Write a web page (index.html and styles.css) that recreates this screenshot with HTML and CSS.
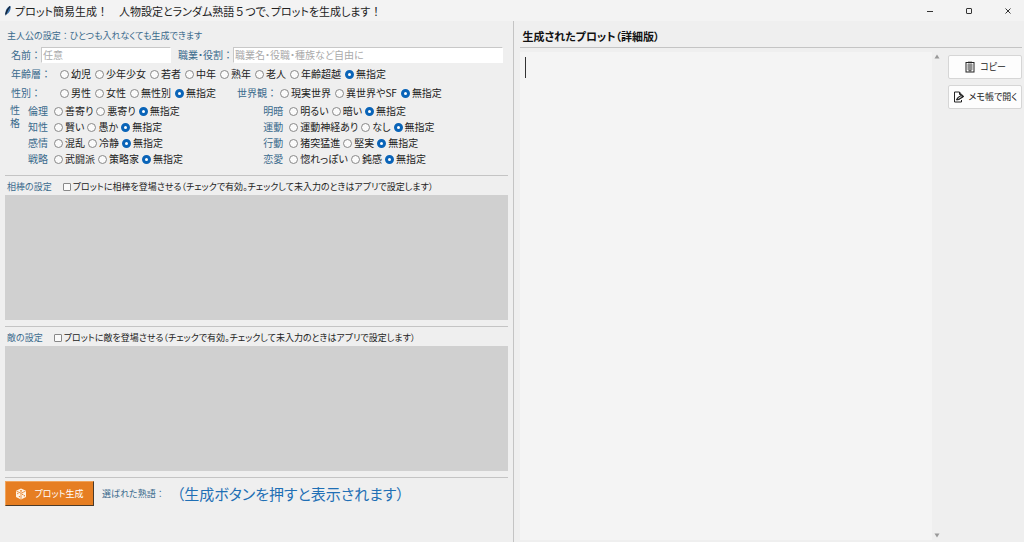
FILE: index.html
```html
<!DOCTYPE html>
<html lang="ja">
<head>
<meta charset="utf-8">
<meta name="viewport" content="width=device-width, initial-scale=1">
<title>プロット簡易生成！</title>
<link rel="stylesheet" href="styles.css">
</head>
<body>
<header class="titlebar">
  <svg class="feather" viewBox="0 0 8 12" aria-hidden="true"><path d="M6.500 1C4 1.500 1.200 4.500 1.500 8.500L1 11L2.500 9.300C5.500 8 7.200 4.500 6.500 1Z" fill="#3d74ad"/><path d="M6 1.500C4 3.500 2.500 6 1.600 9.500" stroke="#16263a" stroke-width="1.400" fill="none"/></svg>
  <h1 class="title">プロット簡易生成<span class="full">！　</span>人物設定とランダム熟語<span class="full">５</span>つで、プロットを生成します<span class="full">！</span></h1>
  <div class="window-buttons">
    <button class="window-button" type="button" aria-label="最小化"><svg viewBox="0 0 8 8"><path d="M1 4.500H7"/></svg></button>
    <button class="window-button" type="button" aria-label="最大化"><svg viewBox="0 0 8 8"><rect x="1.500" y="1.500" width="5" height="5" rx=".5"/></svg></button>
    <button class="window-button" type="button" aria-label="閉じる"><svg viewBox="0 0 8 8"><path d="M1.500 1.500L6.500 6.500M6.500 1.500L1.500 6.500"/></svg></button>
  </div>
</header>
<main class="panes">
  <form class="settings">
    <h2 class="caption">主人公の設定<span class="full">：</span>ひとつも入れなくても生成できます</h2>
    <div class="row names">
      <label class="label full" for="name">名前：</label>
      <input class="field" id="name" type="text" placeholder="任意">
      <label class="label label-job" for="job">職業・役割<span class="full">：</span></label>
      <input class="field field-job" id="job" type="text" placeholder="職業名・役職・種族など自由に">
    </div>
    <div class="row">
      <span class="label label-wide full" id="l-age">年齢層：</span>
      <div class="options" role="radiogroup" aria-labelledby="l-age">
        <label class="option"><input type="radio" name="age">幼児</label>
        <label class="option"><input type="radio" name="age">少年少女</label>
        <label class="option"><input type="radio" name="age">若者</label>
        <label class="option"><input type="radio" name="age">中年</label>
        <label class="option"><input type="radio" name="age">熟年</label>
        <label class="option"><input type="radio" name="age">老人</label>
        <label class="option"><input type="radio" name="age">年齢超越</label>
        <label class="option"><input type="radio" name="age" checked>無指定</label>
      </div>
    </div>
    <div class="row">
      <span class="label label-wide full" id="l-sex">性別：</span>
      <div class="options" role="radiogroup" aria-labelledby="l-sex">
        <label class="option"><input type="radio" name="sex">男性</label>
        <label class="option"><input type="radio" name="sex">女性</label>
        <label class="option"><input type="radio" name="sex">無性別</label>
        <label class="option"><input type="radio" name="sex" checked>無指定</label>
      </div>
      <span class="label label-world full" id="l-world">世界観：</span>
      <div class="options" role="radiogroup" aria-labelledby="l-world">
        <label class="option"><input type="radio" name="world">現実世界</label>
        <label class="option"><input type="radio" name="world">異世界やSF</label>
        <label class="option"><input type="radio" name="world" checked>無指定</label>
      </div>
    </div>
    <div class="traits">
      <span class="label traits-label">性格</span>
      <div class="traits-grid">
        <div class="trait" role="radiogroup" aria-labelledby="t1"><span class="label" id="t1">倫理</span>
          <label class="option"><input type="radio" name="t1">善寄り</label><label class="option"><input type="radio" name="t1">悪寄り</label><label class="option"><input type="radio" name="t1" checked>無指定</label></div>
        <div class="trait" role="radiogroup" aria-labelledby="t2"><span class="label" id="t2">明暗</span>
          <label class="option"><input type="radio" name="t2">明るい</label><label class="option"><input type="radio" name="t2">暗い</label><label class="option"><input type="radio" name="t2" checked>無指定</label></div>
        <div class="trait" role="radiogroup" aria-labelledby="t3"><span class="label" id="t3">知性</span>
          <label class="option"><input type="radio" name="t3">賢い</label><label class="option"><input type="radio" name="t3">愚か</label><label class="option"><input type="radio" name="t3" checked>無指定</label></div>
        <div class="trait" role="radiogroup" aria-labelledby="t4"><span class="label" id="t4">運動</span>
          <label class="option"><input type="radio" name="t4">運動神経あり</label><label class="option"><input type="radio" name="t4">なし</label><label class="option"><input type="radio" name="t4" checked>無指定</label></div>
        <div class="trait" role="radiogroup" aria-labelledby="t5"><span class="label" id="t5">感情</span>
          <label class="option"><input type="radio" name="t5">混乱</label><label class="option"><input type="radio" name="t5">冷静</label><label class="option"><input type="radio" name="t5" checked>無指定</label></div>
        <div class="trait" role="radiogroup" aria-labelledby="t6"><span class="label" id="t6">行動</span>
          <label class="option"><input type="radio" name="t6">猪突猛進</label><label class="option"><input type="radio" name="t6">堅実</label><label class="option"><input type="radio" name="t6" checked>無指定</label></div>
        <div class="trait" role="radiogroup" aria-labelledby="t7"><span class="label" id="t7">戦略</span>
          <label class="option"><input type="radio" name="t7">武闘派</label><label class="option"><input type="radio" name="t7">策略家</label><label class="option"><input type="radio" name="t7" checked>無指定</label></div>
        <div class="trait" role="radiogroup" aria-labelledby="t8"><span class="label" id="t8">恋愛</span>
          <label class="option"><input type="radio" name="t8">惚れっぽい</label><label class="option"><input type="radio" name="t8">鈍感</label><label class="option"><input type="radio" name="t8" checked>無指定</label></div>
      </div>
    </div>
    <section class="character">
      <div class="character-head">
        <h2 class="label">相棒の設定</h2>
        <label class="option"><input type="checkbox">プロットに相棒を登場させる（チェックで有効。チェックして未入力のときはアプリで設定します）</label>
      </div>
      <div class="disabled-area"></div>
    </section>
    <section class="character">
      <div class="character-head">
        <h2 class="label">敵の設定</h2>
        <label class="option"><input type="checkbox">プロットに敵を登場させる（チェックで有効。チェックして未入力のときはアプリで設定します）</label>
      </div>
      <div class="disabled-area"></div>
    </section>
    <div class="actions">
      <button class="generate" type="button">
        <svg class="die" viewBox="0 0 12 12" aria-hidden="true"><path d="M6 .5L11 2.800V9L6 11.500L1 9V2.800Z" fill="#fff3e4"/><path d="M1.500 3.200L6 5.200L10.500 3.200M6 5.200V11" stroke="#e67e22" stroke-width=".8" fill="none"/><g fill="#e67e22"><circle cx="6" cy="2.800" r=".9"/><circle cx="2.800" cy="5.600" r=".7"/><circle cx="4.400" cy="8.600" r=".7"/><circle cx="7.700" cy="6.400" r=".7"/><circle cx="9.300" cy="7.800" r=".7"/></g></svg>
        プロット生成
      </button>
      <span class="label">選ばれた熟語<span class="full">：</span></span>
      <output class="idioms">（生成ボタンを押すと表示されます）</output>
    </div>
  </form>
  <section class="result">
    <h2 class="result-title"><label for="plot">生成されたプロット（詳細版）</label></h2>
    <div class="result-body">
      <div class="editor">
        <textarea class="plot" id="plot"></textarea>
        <span class="caret"></span>
      </div>
      <div class="scrollbar" aria-hidden="true">
        <svg viewBox="0 0 6 5"><path d="M3 .5L5.500 4.500H.5Z"/></svg>
        <svg viewBox="0 0 6 5"><path d="M3 4.500L5.500 .5H.5Z"/></svg>
      </div>
      <div class="tools">
        <button class="tool" type="button"><svg viewBox="0 0 12 12" aria-hidden="true"><rect x="2" y="1.500" width="8" height="9.500"/><path d="M4 1.500H8" stroke-width="1.600"/><path d="M3.500 4H8.500M3.500 6H8.500M3.500 8H8.500M4.500 9.800H7.500"/></svg>コピー</button>
        <button class="tool" type="button"><svg viewBox="0 0 12 12" aria-hidden="true"><path d="M8.500 3.500L6.500 1H1.500V11H8.500V9M6.500 1V3.500H8.500"/><path d="M3.500 9L4.500 6.800L9 3.800L10.800 5.500L6 8.500Z" fill="#222"/><path d="M5.300 7.500L8.500 5.400" stroke="#fff"/></svg>メモ帳で開く</button>
      </div>
    </div>
  </section>
</main>
</body>
</html>
```
FILE: styles.css
```css
* {
  box-sizing: border-box;
}

body {
  display: flex;
  flex-direction: column;
  min-height: 100vh;
  margin: 0;
  background: #efefef;
  color: #222;
  font: 10px/16px "Noto Sans CJK JP", sans-serif;
  font-feature-settings: "palt";
}

h1,
h2 {
  margin: 0;
  font-size: inherit;
  font-weight: 400;
}

button,
input,
textarea {
  margin: 0;
  color: inherit;
  font: inherit;
  font-feature-settings: inherit;
}

.full {
  font-feature-settings: normal;
}

.titlebar {
  display: flex;
  align-items: center;
  height: 21px;
  padding-left: 4px;
  background: #f3f3f3;
}

.feather {
  width: 8px;
  height: 12px;
}

.titlebar .title {
  margin-left: 3px;
  font-size: 11px;
  line-height: 20px;
  white-space: nowrap;
}

.window-buttons {
  display: flex;
  gap: 7px;
  margin-left: auto;
}

.window-button {
  display: grid;
  place-items: center;
  width: 32px;
  height: 20px;
  padding: 0;
  border: 0;
  background: none;
}

.window-button svg {
  width: 8px;
  height: 8px;
  fill: none;
  stroke: #333;
}

.panes {
  display: flex;
  flex: 1;
}

.settings {
  flex: 513 1 0;
  min-width: 0;
  padding: 7px 5px 8px;
  border-right: 1px solid #c4c4c4;
}

.caption {
  padding-left: 2px;
  color: #3a6a8c;
  font-size: 9px;
}

.label {
  color: #3a6a8c;
  white-space: nowrap;
}

.row {
  display: flex;
  align-items: center;
  margin-top: 3px;
  padding: 0 5px 0 6px;
}

.field {
  width: 130px;
  height: 16px;
  padding: 0 1px;
  border: 1px solid #fff;
  border-top-color: #c8c8c8;
  border-left-color: #c8c8c8;
  background: #fff;
  outline: 0;
}

.field::placeholder {
  color: #aaa;
}

.field-job {
  flex: 1;
  min-width: 0;
}

.names .label {
  width: 30px;
}

.names .label-job {
  width: 55px;
  margin-left: 7px;
}

.label-wide {
  width: 49px;
}

.label-world {
  width: 43px;
  margin-left: 21px;
}

.options {
  display: flex;
  gap: 4px;
}

.option {
  display: flex;
  align-items: center;
  gap: 2px;
  white-space: nowrap;
}

.option input {
  flex: none;
  width: 9px;
  height: 9px;
  border: 1px solid #888;
  background: #fafafa;
  appearance: none;
}

.option input[type="radio"] {
  border-radius: 50%;
}

.option input[type="radio"]:checked {
  border: 3px solid #0a64b8;
  background: #fff;
}

.option input[type="checkbox"] {
  width: 8px;
  height: 8px;
  border-radius: 1px;
}

.option input[type="checkbox"]:checked {
  background: #0a64b8;
}

.traits {
  display: flex;
  gap: 8px;
  margin-top: 2px;
  padding-left: 5px;
}

.traits-label {
  width: 10px;
  line-height: 13px;
  white-space: normal;
}

.traits-grid {
  display: grid;
  flex: 1;
  grid-template-columns: 1fr 1fr;
  padding-right: 10px;
}

.trait {
  display: flex;
  gap: 3px;
}

.trait > .label {
  width: 23px;
}

.character {
  margin-top: 6px;
  border-top: 1px solid #c4c4c4;
}

.traits + .character {
  margin-top: 8px;
}

.character-head {
  display: flex;
  gap: 11px;
  padding: 3px 2px 0;
  font-size: 9px;
}

.disabled-area {
  height: 125px;
  background: #d0d0d0;
}

.actions {
  display: flex;
  align-items: center;
  gap: 8px;
  margin-top: 6px;
  padding-top: 3px;
  border-top: 1px solid #c4c4c4;
  font-size: 9px;
}

.generate {
  display: flex;
  align-items: center;
  justify-content: center;
  gap: 7px;
  width: 89px;
  height: 25px;
  padding: 0;
  border: 1px solid #f0a35a;
  border-right-color: #4a3a2a;
  border-bottom-color: #4a3a2a;
  background: #e67e22;
  color: #fff;
}

.die {
  width: 12px;
  height: 12px;
}

.idioms {
  margin-left: 4px;
  color: #1f6fb5;
  font-size: 15px;
  line-height: 24px;
}

.result {
  display: flex;
  flex: 511 1 0;
  flex-direction: column;
  min-width: 0;
  padding: 7px 2px 2px 6px;
}

.result-title {
  padding: 0 2px 3px;
  border-bottom: 1px solid #c4c4c4;
  color: #111;
  font-size: 11px;
  font-weight: 700;
}

.result-body {
  display: flex;
  flex: 1;
  padding-top: 4px;
}

.editor {
  position: relative;
  display: flex;
  flex: 1;
}

.plot {
  flex: 1;
  min-width: 0;
  padding: 4px 6px;
  border: 0;
  background: #f4f4f4;
  outline: 0;
  font-size: 16px;
  resize: none;
}

.caret {
  position: absolute;
  top: 5px;
  left: 5px;
  width: 1px;
  height: 21px;
  background: #333;
}

.scrollbar {
  display: flex;
  flex-direction: column;
  align-items: center;
  justify-content: space-between;
  width: 10px;
  padding: 2px 0;
}

.scrollbar svg {
  width: 6px;
  height: 5px;
  fill: #999;
}

.tools {
  display: flex;
  flex-direction: column;
  gap: 6px;
  width: 74px;
  margin-left: 6px;
  padding-top: 3px;
}

.tool {
  display: flex;
  align-items: center;
  justify-content: center;
  gap: 4px;
  height: 24px;
  padding: 0;
  border: 1px solid #d6d6d6;
  border-radius: 2px;
  background: #fdfdfd;
  font-size: 9px;
  white-space: nowrap;
}

.tool svg {
  width: 12px;
  height: 12px;
  fill: none;
  stroke: #222;
  stroke-width: 1;
}
```
